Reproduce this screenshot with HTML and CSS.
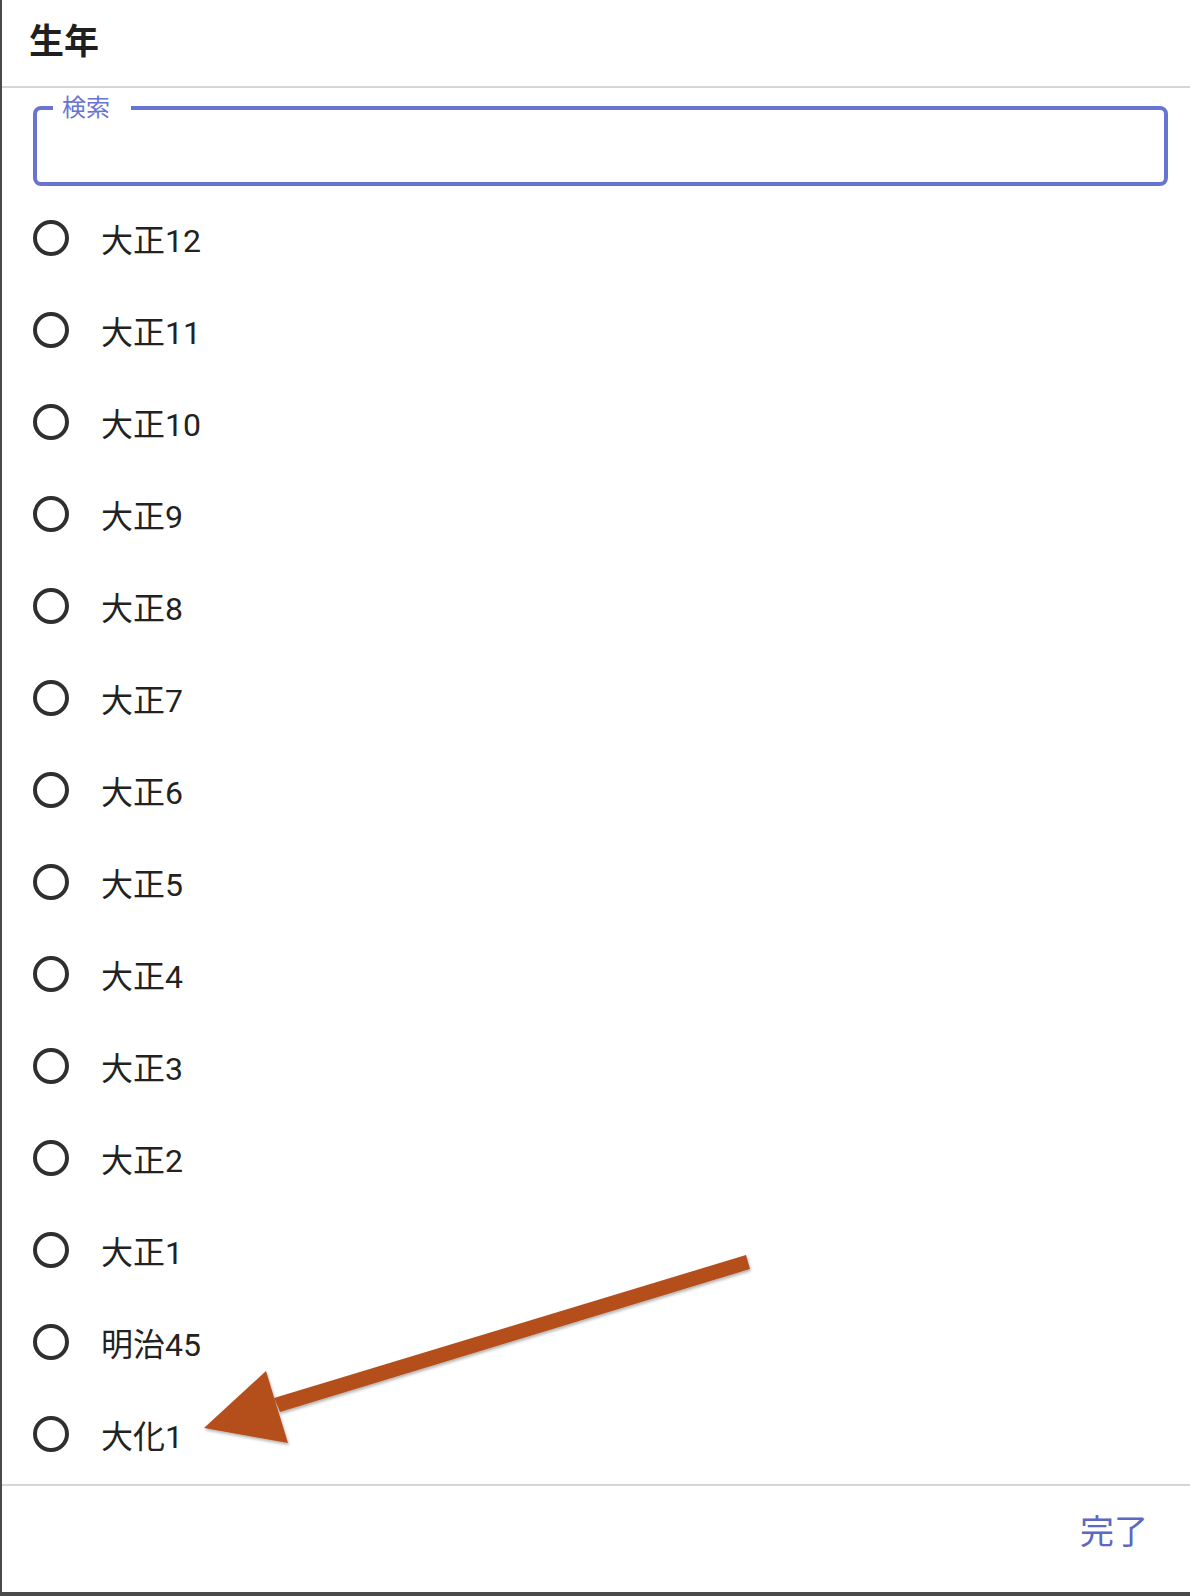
FILE: index.html
```html
<!DOCTYPE html>
<html lang="ja">
<head>
    <meta charset="UTF-8">
    <title>生年</title>
    <link rel="stylesheet" href="styles.css">
</head>
<body>

    <!-- Dialog -->
    <div class="dialog">
        <div class="dialog-title">生年</div>

        <div class="dialog-content">
            <!-- Search field -->
            <fieldset class="search-field">
                <legend>検索</legend>
                <input type="text" class="search-input">
            </fieldset>

            <!-- Options -->
            <ul class="options">
                <li class="option"><span class="radio"></span>大正12</li>
                <li class="option"><span class="radio"></span>大正11</li>
                <li class="option"><span class="radio"></span>大正10</li>
                <li class="option"><span class="radio"></span>大正9</li>
                <li class="option"><span class="radio"></span>大正8</li>
                <li class="option"><span class="radio"></span>大正7</li>
                <li class="option"><span class="radio"></span>大正6</li>
                <li class="option"><span class="radio"></span>大正5</li>
                <li class="option"><span class="radio"></span>大正4</li>
                <li class="option"><span class="radio"></span>大正3</li>
                <li class="option"><span class="radio"></span>大正2</li>
                <li class="option"><span class="radio"></span>大正1</li>
                <li class="option"><span class="radio"></span>明治45</li>
                <li class="option"><span class="radio"></span>大化1</li>
            </ul>
        </div>

        <div class="dialog-actions">
            <button class="done-button">完了</button>
        </div>
    </div>

    <!-- Annotation arrow -->
    <svg class="annotation" width="1190" height="1596" viewBox="0 0 1190 1596">
        <defs>
            <filter id="shadow" x="-10%" y="-10%" width="120%" height="130%">
                <feDropShadow dx="1" dy="2" stdDeviation="1.5" flood-color="#000" flood-opacity="0.3"/>
            </filter>
        </defs>
        <g filter="url(#shadow)" fill="#b4501f">
            <polygon points="746,1255 750,1269 280,1412 274,1398"/>
            <polygon points="204,1428 266,1371 288,1443"/>
        </g>
    </svg>

</body>
</html>
```

FILE: styles.css
```css
/* Reset */
* {
    margin: 0;
    padding: 0;
    box-sizing: border-box;
}

body {
    background: #4a4a4a;
    font-family: Roboto, "Noto Sans CJK JP", sans-serif;
    color: #212121;
    height: 1596px;
    overflow: hidden;
    position: relative;
}

/* Dialog box */
.dialog {
    margin-left: 2px;
    height: 1592px;
    background: #fff;
    display: flex;
    flex-direction: column;
}

.dialog-title {
    height: 88px;
    padding: 0 0 10px 27px;
    display: flex;
    align-items: center;
    font-size: 35px;
    font-weight: bold;
    color: #1f1f1f;
    border-bottom: 2px solid #d6d6d6;
    flex-shrink: 0;
}

.dialog-content {
    flex: 1;
    padding: 8px 22px 0 31px;
    overflow: hidden;
}

/* Outlined search field */
.search-field {
    border: 4px solid #6874d2;
    border-radius: 8px;
    padding: 0;
}

.search-field legend {
    margin-left: 16px;
    padding: 0 21px 0 9px;
    font-size: 24px;
    line-height: 24px;
    color: #6874d2;
}

.search-input {
    display: block;
    width: 100%;
    height: 62px;
    border: none;
    outline: none;
    background: transparent;
}

/* Radio list */
.options {
    list-style: none;
    margin-top: 6px;
}

.option {
    height: 92px;
    display: flex;
    align-items: center;
    gap: 32px;
    font-size: 32px;
    color: #222;
}

.radio {
    width: 36px;
    height: 36px;
    border: 4px solid #2f2f2f;
    border-radius: 50%;
    flex-shrink: 0;
}

/* Footer */
.dialog-actions {
    height: 108px;
    border-top: 2px solid #d6d6d6;
    display: flex;
    justify-content: flex-end;
    align-items: center;
    padding: 0 42px 20px 0;
    flex-shrink: 0;
}

.done-button {
    background: none;
    border: none;
    font-family: inherit;
    font-size: 34px;
    color: #5c68c4;
    cursor: pointer;
}

/* Arrow annotation over the list */
.annotation {
    position: absolute;
    top: 0;
    left: 0;
    pointer-events: none;
}
```
